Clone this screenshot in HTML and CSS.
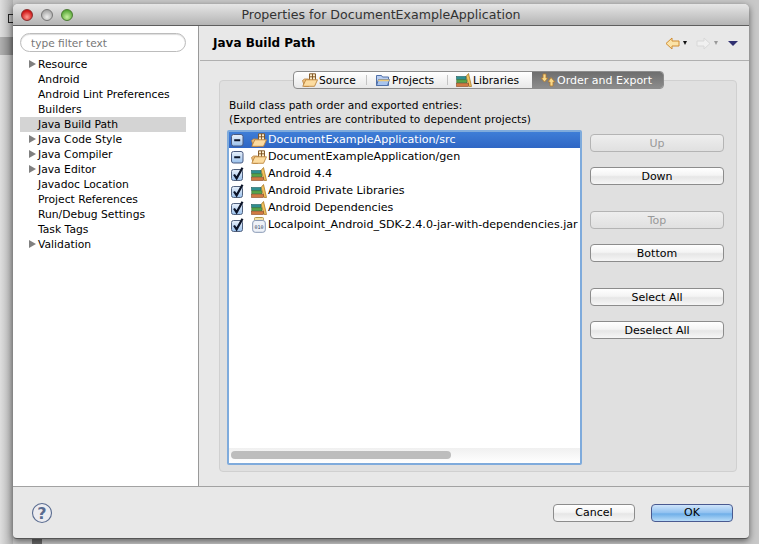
FILE: index.html
```html
<!DOCTYPE html>
<html lang="en">
<head>
  <meta charset="UTF-8" />
  <title>Properties for DocumentExampleApplication</title>
  <link rel="stylesheet" href="styles.css">
</head>
<body>
  <svg class="defs" width="0" height="0">
    <defs>
      <symbol id="folder" viewBox="0 0 16 14">
        <path d="M2.500 13.500l-2-6 2-1.500h4v7.500z" fill="#eebf7c" stroke="#b5803c" stroke-width=".8"/>
        <path d="M7.500 0.800h6v6.500h-6zM10.500 0.800v6.500M7.500 3.800h6" fill="#fbeccb" stroke="#7a4e1c" stroke-width=".9"/>
        <path d="M0.800 13.300l3-6.500h11.700l-3 6.500z" fill="#fcdca0" stroke="#bd8740" stroke-width=".9"/>
      </symbol>
      <symbol id="books" viewBox="0 0 16 14">
        <path d="M10 3.500l2.500-3 3 13h-2.300z" fill="#f2c25c" stroke="#a87a28" stroke-width=".8"/>
        <rect x="0.500" y="3.500" width="9.500" height="3" fill="#2f8f90" stroke="#205f60" stroke-width=".6"/>
        <rect x="0.800" y="6.800" width="10" height="3" fill="#58a548" stroke="#33702e" stroke-width=".6"/>
        <rect x="0.500" y="10.200" width="12" height="3.300" fill="#d07a42" stroke="#8a4a22" stroke-width=".6"/>
      </symbol>
      <symbol id="jar" viewBox="0 0 14 16">
        <rect x="2.500" y="0.500" width="9" height="3" rx="1" fill="#f4e2a8" stroke="#b09848"/>
        <rect x="0.700" y="3.500" width="12.600" height="11.800" rx="2.500" fill="#eef2f8" stroke="#8898b4"/>
        <text x="7" y="11.500" class="jar-text">010</text>
      </symbol>
      <symbol id="check" viewBox="0 0 14 14">
        <rect x="0.500" y="2.500" width="11" height="11" rx="2" fill="url(#boxfill)" stroke="#52627e"/>
        <path d="M3 7.500l2.600 3.800L11.500 0.800" fill="none" stroke="#0c1428" stroke-width="2.200"/>
      </symbol>
      <symbol id="minus" viewBox="0 0 14 14">
        <rect x="0.500" y="1.500" width="11.500" height="11.500" rx="2" fill="url(#boxfill)" stroke="#4a5a80"/>
        <path d="M3.200 7.200h6" stroke="#0c1428" stroke-width="2"/>
      </symbol>
      <linearGradient id="boxfill" x1="0" y1="0" x2="0" y2="1">
        <stop offset="0" stop-color="#e8f0fa"/>
        <stop offset=".5" stop-color="#c4daf4"/>
        <stop offset="1" stop-color="#98c0ec"/>
      </linearGradient>
    </defs>
  </svg>

  <div class="desk-icon"></div>
  <div class="desk-bar"></div>
  <div class="desk-foot"></div>

  <div class="window">
    <div class="titlebar">
      <div class="lights">
        <span class="light red"></span>
        <span class="light grey"></span>
        <span class="light green"></span>
      </div>
      <div class="title">Properties for DocumentExampleApplication</div>
    </div>

    <div class="main">
      <aside class="sidebar">
        <div class="filter">type filter text</div>
        <ul class="tree">
          <li class="has-kids">Resource</li>
          <li>Android</li>
          <li>Android Lint Preferences</li>
          <li>Builders</li>
          <li class="current">Java Build Path</li>
          <li class="has-kids">Java Code Style</li>
          <li class="has-kids">Java Compiler</li>
          <li class="has-kids">Java Editor</li>
          <li>Javadoc Location</li>
          <li>Project References</li>
          <li>Run/Debug Settings</li>
          <li>Task Tags</li>
          <li class="has-kids">Validation</li>
        </ul>
      </aside>

      <section class="content">
        <header class="page-head">
          <h1>Java Build Path</h1>
          <div class="nav-icons">
            <svg width="15" height="13" viewBox="0 0 15 13"><path d="M7 1L1 6.500L7 12V9h7V4H7z" fill="#fbe3a8" stroke="#d08c30"/></svg>
            <span class="caret"></span>
            <svg class="next" width="15" height="13" viewBox="0 0 15 13"><path d="M8 1l6 5.500L8 12V9H1V4h7z" fill="#f0f0f0" stroke="#d8d8d8"/></svg>
            <span class="caret off"></span>
            <span class="menu-caret"></span>
          </div>
        </header>

        <div class="panel">
          <div class="tabs">
            <div class="tab source"><svg width="16" height="14"><use href="#folder"/></svg>Source</div>
            <div class="tab projects">
              <svg width="16" height="14" viewBox="0 0 16 14"><path d="M1.500 2.500h5l1 1.500h6v8.500h-12z" fill="#b8cdf0" stroke="#5070a8"/><path d="M1.500 12.500l2-6h11l-2 6z" fill="#a8c4ee" stroke="#5070a8"/><path d="M3.500 6.500h11l-.6 1.800h-11z" fill="#ecc878"/></svg>Projects
            </div>
            <div class="tab libraries"><svg width="16" height="14"><use href="#books"/></svg>Libraries</div>
            <div class="tab active">
              <svg width="16" height="14" viewBox="0 0 16 14"><path d="M3 1h3v4h2L4.500 9 1 5h2z" fill="#f8d888" stroke="#b07a30" stroke-width=".8"/><path d="M11 4.500L15 9h-2v4h-3V9H8z" fill="#f8d888" stroke="#b07a30" stroke-width=".8"/></svg>Order and Export
            </div>
          </div>

          <p class="intro">Build class path order and exported entries:<br>(Exported entries are contributed to dependent projects)</p>

          <div class="order-row">
            <div class="list">
              <div class="rows">
                <div class="row selected"><svg width="14" height="14"><use href="#minus"/></svg><svg class="ico" width="16" height="14"><use href="#folder"/></svg>DocumentExampleApplication/src</div>
                <div class="row"><svg width="14" height="14"><use href="#minus"/></svg><svg class="ico" width="16" height="14"><use href="#folder"/></svg>DocumentExampleApplication/gen</div>
                <div class="row"><svg width="14" height="14"><use href="#check"/></svg><svg class="ico" width="16" height="14"><use href="#books"/></svg>Android 4.4</div>
                <div class="row"><svg width="14" height="14"><use href="#check"/></svg><svg class="ico" width="16" height="14"><use href="#books"/></svg>Android Private Libraries</div>
                <div class="row"><svg width="14" height="14"><use href="#check"/></svg><svg class="ico" width="16" height="14"><use href="#books"/></svg>Android Dependencies</div>
                <div class="row"><svg width="14" height="14"><use href="#check"/></svg><svg class="ico" width="16" height="16"><use href="#jar"/></svg>Localpoint_Android_SDK-2.4.0-jar-with-dependencies.jar</div>
              </div>
              <div class="hscroll"><div class="thumb"></div></div>
            </div>

            <div class="buttons">
              <button class="btn" disabled>Up</button>
              <button class="btn">Down</button>
              <button class="btn gap" disabled>Top</button>
              <button class="btn">Bottom</button>
              <button class="btn gap">Select All</button>
              <button class="btn">Deselect All</button>
            </div>
          </div>
        </div>
      </section>
    </div>

    <footer class="footer">
      <svg class="help" width="22" height="22" viewBox="0 0 22 22">
        <circle cx="11" cy="11" r="9.500" fill="#ececf0" stroke="#5a6c90" stroke-width="1.100"/>
        <text x="11" y="16.500" class="help-text">?</text>
      </svg>
      <div class="footer-btns">
        <button class="btn big">Cancel</button>
        <button class="btn big default">OK</button>
      </div>
    </footer>
  </div>
</body>
</html>
```

FILE: styles.css
```css
* {
  box-sizing: border-box;
}

html, body {
  margin: 0;
  height: 544px;
  overflow: hidden;
}

body {
  font-family: "DejaVu Sans", sans-serif;
  font-size: 11px;
  color: #000;
  background: linear-gradient(to right, #dedede, #b0b0b0 13px, #c8c8c8 13px);
  padding: 4px 10px 0 13px;
  position: relative;
}

.defs {
  position: absolute;
}

.jar-text {
  font: 5px "DejaVu Sans Mono", monospace;
  text-anchor: middle;
  fill: #304060;
}

.help-text {
  font: bold 16px "DejaVu Sans", sans-serif;
  text-anchor: middle;
  fill: #5a6c90;
}

.desk-icon {
  position: absolute;
  left: 8px;
  top: 14px;
  width: 6px;
  height: 9px;
  border: 1px solid #222;
}

.desk-bar {
  position: absolute;
  left: 0;
  top: 37px;
  width: 13px;
  height: 18px;
  background: linear-gradient(to right, #b0b0b0, #7c7c7c);
}

.desk-foot {
  position: absolute;
  left: 32px;
  top: 539px;
  width: 10px;
  height: 5px;
  background: #6a6a6a;
}

.window {
  position: relative;
  width: 736px;
  height: 535px;
  border-radius: 5px 5px 4px 4px;
  background: #e8e8e8;
  box-shadow: 0 2px 7px rgba(0,0,0,0.55);
  display: flex;
  flex-direction: column;
  overflow: hidden;
  border-bottom: 1px solid #555;
}

.titlebar {
  height: 22px;
  flex: none;
  display: flex;
  align-items: center;
  background: linear-gradient(#e6e6e6, #b4b4b4);
  border-bottom: 1px solid #5e5e5e;
  position: relative;
}

.lights {
  display: flex;
  gap: 8px;
  margin-left: 8px;
}

.light {
  width: 12px;
  height: 12px;
  border-radius: 50%;
  border: 1px solid #777;
}

.light.red {
  background: radial-gradient(circle at 50% 70%, #ff9a90, #d01818 70%);
  border-color: #8a2a2a;
}

.light.grey {
  background: radial-gradient(circle at 50% 70%, #eee, #a8a8a8 75%);
}

.light.green {
  background: radial-gradient(circle at 50% 70%, #c8f0a0, #58a838 75%);
  border-color: #4a7a30;
}

.title {
  position: absolute;
  left: 0;
  right: 0;
  text-align: center;
  font-size: 12.6px;
  color: #333;
}

.main {
  flex: 1;
  display: flex;
  min-height: 0;
  border-bottom: 1px solid #a2a2a2;
}

.sidebar {
  width: 186px;
  flex: none;
  background: #fff;
  border-right: 1px solid #999;
  padding: 7px 0 0 7px;
}

.filter {
  width: 166px;
  height: 19px;
  line-height: 18px;
  font-size: 10.6px;
  border: 1px solid #bcbcbc;
  border-radius: 10px;
  padding-left: 10px;
  color: #777;
  box-shadow: inset 0 1px 1px #ddd;
}

.tree {
  list-style: none;
  margin: 5px 0 0;
  padding: 0;
  width: 166px;
  font-size: 10.75px;
}

.tree li {
  height: 15px;
  line-height: 15px;
  padding-left: 18px;
  white-space: nowrap;
  position: relative;
}

.tree li.current {
  background: #d4d4d4;
}

.tree li.has-kids::before {
  content: "";
  position: absolute;
  left: 9px;
  top: 3px;
  border-left: 7px solid #808080;
  border-top: 4.500px solid transparent;
  border-bottom: 4.500px solid transparent;
}

.content {
  flex: 1;
  min-width: 0;
  display: flex;
  flex-direction: column;
}

.page-head {
  height: 35px;
  flex: none;
  display: flex;
  align-items: center;
  justify-content: space-between;
  padding: 0 11px 0 13px;
  border-bottom: 1px solid #b0b0b0;
  margin-left: 1px;
}

.page-head h1 {
  margin: 0;
  font-size: 12px;
  font-weight: bold;
}

.nav-icons {
  display: flex;
  align-items: center;
  gap: 3px;
}

.nav-icons .next {
  margin-left: 6px;
}

.caret {
  width: 0;
  border-left: 2.500px solid transparent;
  border-right: 2.500px solid transparent;
  border-top: 4px solid #111;
}

.caret.off {
  border-top-color: #999;
}

.menu-caret {
  margin-left: 7px;
  width: 0;
  border-left: 5px solid transparent;
  border-right: 5px solid transparent;
  border-top: 5px solid #303070;
}

.panel {
  position: relative;
  margin: 19px 12px 0 20px;
  height: 392px;
  background: #e0e0e0;
  border: 1px solid #d0d0d0;
  border-radius: 4px;
  padding: 17px 7px 0;
}

.tabs {
  position: absolute;
  top: -10px;
  left: 73px;
  width: 371px;
  height: 18px;
  display: flex;
  font-size: 10.7px;
  background: linear-gradient(#fff, #e8e8e8);
  border: 1px solid #8c8c8c;
  border-radius: 4px;
  overflow: hidden;
}

.tab {
  position: relative;
  display: flex;
  align-items: center;
  gap: 1px;
  padding-left: 8px;
  white-space: nowrap;
  flex: none;
}

.tab.source {
  width: 73px;
}

.tab.projects {
  width: 81px;
}

.tab.libraries {
  width: 84px;
}

.tab.source::after,
.tab.projects::after {
  content: "";
  position: absolute;
  right: 0;
  top: 3px;
  bottom: 3px;
  border-right: 1px solid #c4c4c4;
}

.tab.active {
  flex: 1;
  font-size: 11px;
  color: #fff;
  background: linear-gradient(#6e6e6e, #8c8c8c);
}

.intro {
  margin: 0;
  line-height: 14px;
  padding-left: 2px;
  font-size: 10.6px;
}

.order-row {
  display: flex;
  margin-top: 4px;
}

.list {
  width: 355px;
  height: 335px;
  flex: none;
  font-size: 11.1px;
  background: #fff;
  border: 2px solid #7fabdc;
  border-radius: 2px;
  display: flex;
  flex-direction: column;
  overflow: hidden;
}

.rows {
  flex: 1;
  margin-top: -1px;
}

.row {
  height: 17px;
  display: flex;
  align-items: center;
  padding-left: 2px;
  white-space: nowrap;
}

.row.selected {
  background: linear-gradient(#3f7fd8, #2f66c4);
  color: #fff;
}

.row .ico {
  margin: 0 1px 0 6px;
}

.row svg {
  flex: none;
}

.hscroll {
  height: 15px;
  flex: none;
  padding: 3px 2px;
  background: linear-gradient(#f0f0f0, #fff);
}

.thumb {
  width: 220px;
  height: 8px;
  border-radius: 4px;
  background: #bdbdbd;
}

.buttons {
  display: flex;
  flex-direction: column;
  gap: 15px;
  margin: 4px 0 0 8px;
}

.btn {
  width: 134px;
  height: 18px;
  padding: 0;
  font: 11px "DejaVu Sans", sans-serif;
  color: #000;
  background: linear-gradient(#fff, #f4f4f4 45%, #e6e6e6 55%, #f6f6f6);
  border: 1px solid #8c8c8c;
  border-radius: 4px;
}

.btn.gap {
  margin-top: 11px;
}

.btn:disabled {
  color: #999;
  background: linear-gradient(#eeeeee, #e0e0e0);
  border-color: #b4b4b4;
}

.footer {
  height: 51px;
  flex: none;
  display: flex;
  align-items: center;
  justify-content: space-between;
  padding: 0 16px 0 18px;
}

.footer-btns {
  display: flex;
  gap: 16px;
}

.btn.big {
  width: 82px;
  height: 18px;
}

.btn.default {
  background: linear-gradient(#cfe4fa, #8fc0f0 50%, #6eaee8 55%, #b8dcf8);
  border-color: #4a5a90;
}
```
